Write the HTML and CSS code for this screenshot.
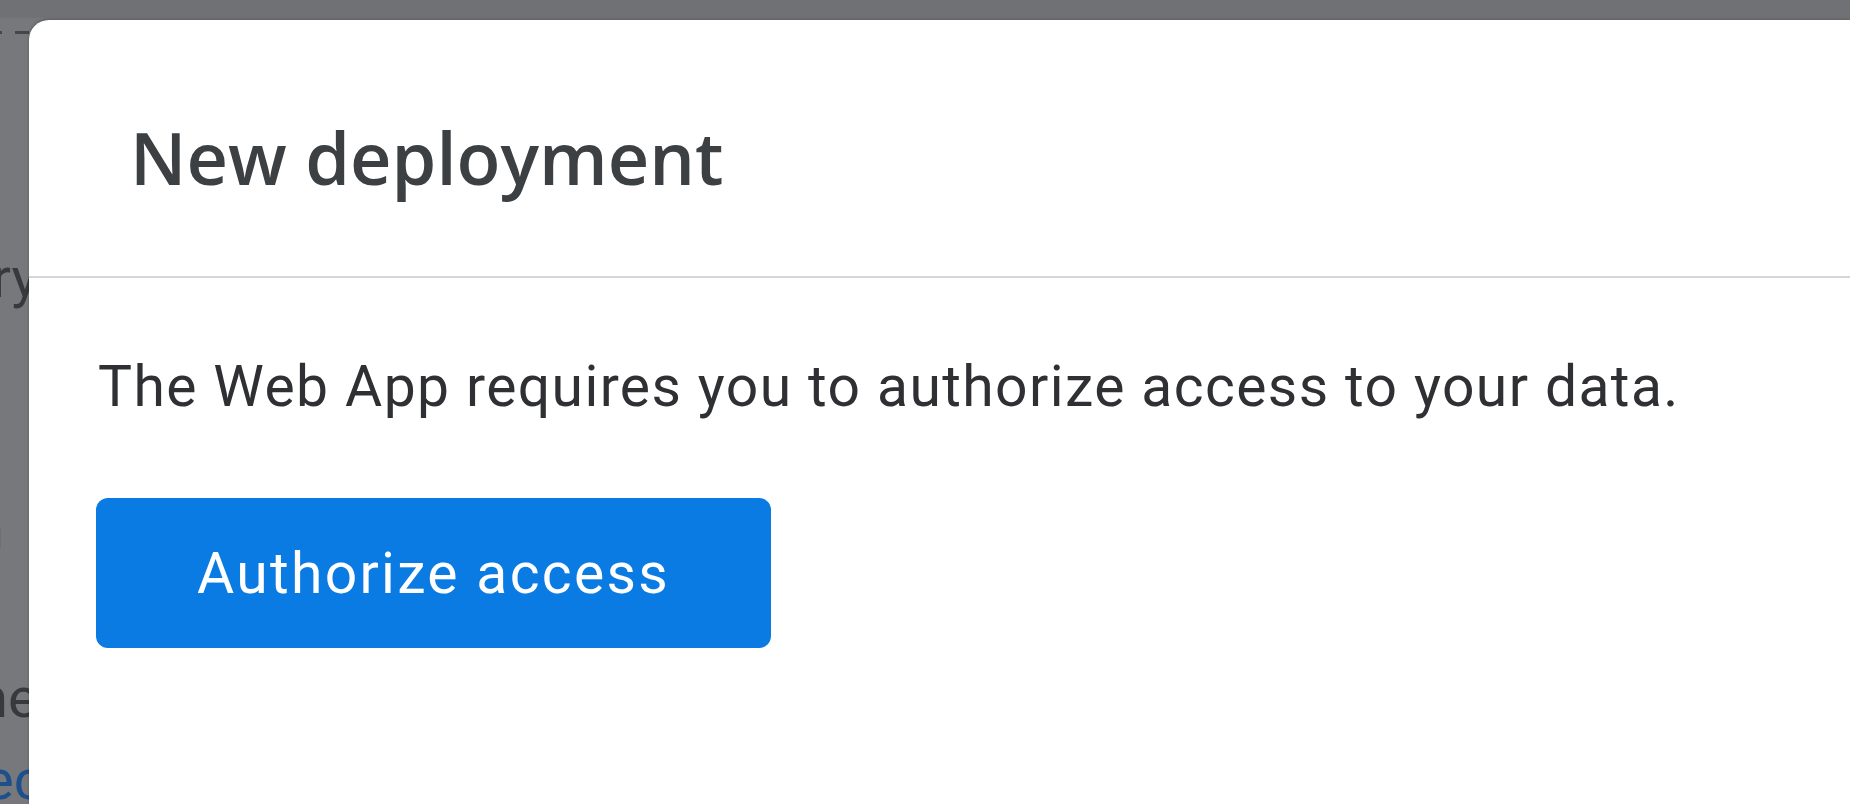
FILE: index.html
```html
<!DOCTYPE html>
<html lang="en">
<head>
<meta charset="utf-8">
<title>New deployment</title>
<link rel="stylesheet" href="styles.css">
</head>
<body>
<div class="page">
  <div class="backdrop">
    <div class="tabline"><span class="dash-a"></span><span class="dash-b"></span></div>
    <div class="frag frag-ry">ry</div>
    <div class="frag frag-n">n</div>
    <div class="frag frag-ne">ne</div>
    <div class="frag frag-ec">ec</div>
  </div>
  <div class="dialog">
    <div class="dialog-header">
      <h1 class="dialog-title">New deployment</h1>
    </div>
    <div class="dialog-body">
      <p class="dialog-text">The Web App requires you to authorize access to your data.</p>
      <button class="btn-primary">Authorize access</button>
    </div>
  </div>
</div>
</body>
</html>
```

FILE: styles.css
```css
html, body {
  margin: 0;
  padding: 0;
  height: 100%;
  overflow: hidden;
}
body {
  background: #77787b;
  font-family: Roboto, "Liberation Sans", Arial, sans-serif;
}
.page {
  display: flex;
  height: 804px;
  background: linear-gradient(#707174 0, #707174 17px, #77787b 19px);
}
.backdrop {
  width: 29px;
  flex: none;
  overflow: hidden;
  display: flex;
  flex-direction: column;
  color: #38393c;
}
.tabline {
  display: flex;
  flex: none;
  margin-top: 31px;
  height: 3px;
}
.dash-a {
  width: 3px;
  background: #45464a;
}
.dash-b {
  width: 20px;
  margin-left: 13px;
  background: #45464a;
}
.frag {
  flex: none;
  white-space: nowrap;
  font-size: 56px;
  line-height: 56px;
  height: 56px;
}
.frag-ry {
  margin-top: 216px;
  margin-left: -8px;
}
.frag-n {
  margin-top: 195px;
  margin-left: -27px;
}
.frag-ne {
  margin-top: 113px;
  margin-left: -23px;
}
.frag-ec {
  margin-top: 26px;
  margin-left: -16px;
  color: #1d4f8c;
}
.dialog {
  flex: 1;
  margin-top: 20px;
  background: #ffffff;
  border-top-left-radius: 20px;
  box-shadow: 0 -1px 3px rgba(0,0,0,0.25);
  display: flex;
  flex-direction: column;
}
.dialog-header {
  height: 258px;
  border-bottom: 2px solid #d3d6dc;
  box-sizing: border-box;
  padding-left: 101px;
  display: flex;
  align-items: flex-start;
}
.dialog-title {
  margin: 97px 0 0 0;
  font-family: "Open Sans", Roboto, sans-serif;
  font-weight: 600;
  font-size: 72px;
  line-height: 80px;
  color: #3c4043;
  letter-spacing: 0;
}
.dialog-body {
  padding-left: 67px;
  display: flex;
  flex-direction: column;
  align-items: flex-start;
}
.dialog-text {
  margin: 76px 0 0 2px;
  font-size: 57px;
  line-height: 66px;
  color: #2f3033;
  letter-spacing: 1.4px;
}
.btn-primary {
  margin-top: 78px;
  width: 675px;
  height: 150px;
  border: none;
  border-radius: 12px;
  background: #0a7be3;
  color: #ffffff;
  font-family: Roboto, "Liberation Sans", sans-serif;
  font-size: 57px;
  letter-spacing: 2.3px;
  padding: 0;
}
```
